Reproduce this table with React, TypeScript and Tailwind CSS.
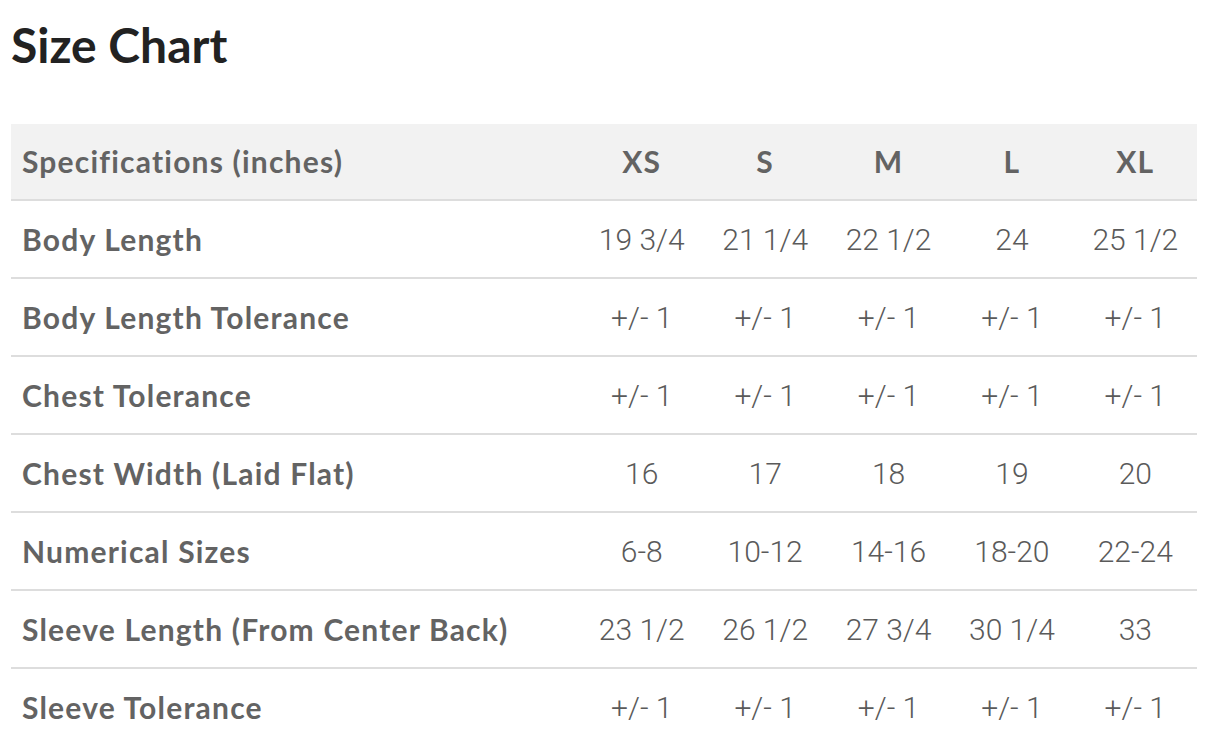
import React from "react";

const sizes = ["XS", "S", "M", "L", "XL"];
const rows: [string, string[]][] = [
  ["Body Length", ["19 3/4", "21 1/4", "22 1/2", "24", "25 1/2"]],
  ["Body Length Tolerance", ["+/- 1", "+/- 1", "+/- 1", "+/- 1", "+/- 1"]],
  ["Chest Tolerance", ["+/- 1", "+/- 1", "+/- 1", "+/- 1", "+/- 1"]],
  ["Chest Width (Laid Flat)", ["16", "17", "18", "19", "20"]],
  ["Numerical Sizes", ["6-8", "10-12", "14-16", "18-20", "22-24"]],
  ["Sleeve Length (From Center Back)", ["23 1/2", "26 1/2", "27 3/4", "30 1/4", "33"]],
  ["Sleeve Tolerance", ["+/- 1", "+/- 1", "+/- 1", "+/- 1", "+/- 1"]],
];

export default function App() {
  return (
    <div className="w-[1218px] h-[736px] overflow-hidden bg-white font-['Lato',sans-serif]">
      <div className="pl-[11px] pr-[21px]">
        <h1 className="pt-[18px] h-[124px] text-[48px] font-bold leading-[54px] text-[#222222]">
          Size Chart
        </h1>
        <table className="w-full border-collapse">
          <thead>
            <tr className="bg-[#f2f2f2] h-[76px] border-b-2 border-[#dddddd]">
              <th className="text-left pl-[11px] text-[30px] font-bold tracking-[1.2px] text-[#636363]">
                Specifications (inches)
              </th>
              {sizes.map((s) => (
                <th key={s} className="w-[123.4px] text-center text-[30px] font-bold tracking-[1.2px] text-[#636363]">
                  {s}
                </th>
              ))}
            </tr>
          </thead>
          <tbody>
            {rows.map(([label, vals], i) => (
              <tr key={label} className={`h-[78px] ${i < rows.length - 1 ? "border-b-2 border-[#dddddd]" : ""}`}>
                <td className="pl-[11px] text-[30px] font-bold tracking-[1.2px] text-[#636363]">{label}</td>
                {vals.map((v, j) => (
                  <td key={j} className="text-center text-[30px] text-[#5a5a5a] font-['Roboto',sans-serif] font-light">
                    {v}
                  </td>
                ))}
              </tr>
            ))}
          </tbody>
        </table>
      </div>
    </div>
  );
}
